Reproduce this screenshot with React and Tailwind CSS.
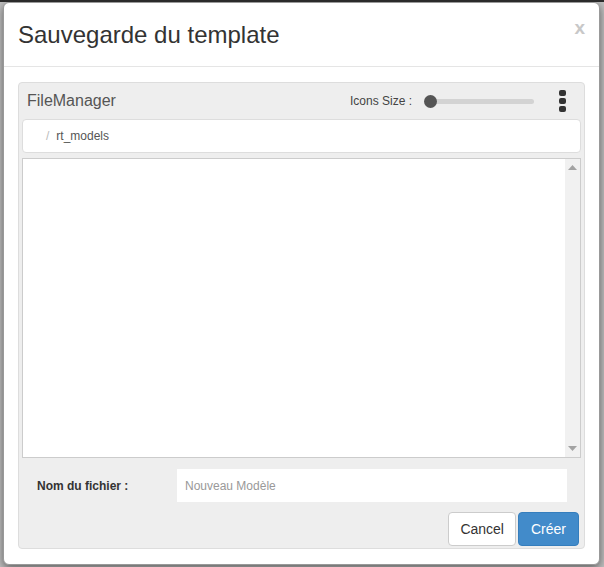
import React from "react";

const Kebab = () => (
  <div className="flex flex-col items-center gap-[2px] w-[8px] ml-[24px]">
    <span className="block w-[7px] h-[6px] rounded-[2px] bg-[#333]" />
    <span className="block w-[7px] h-[6px] rounded-[2px] bg-[#333]" />
    <span className="block w-[7px] h-[6px] rounded-[2px] bg-[#333]" />
  </div>
);

const IconsSlider = ({ value = 0 }) => (
  <div className="flex items-center">
    <span className="text-[12px] text-[#444] mr-[12px]">Icons Size :</span>
    <div className="relative w-[110px] h-[12px] flex items-center">
      <div className="w-full h-[5px] ml-[6px] bg-[#d3d3d3] rounded-sm" />
      <span
        className="absolute top-0 w-[13px] h-[13px] rounded-full bg-[#555]"
        style={{ left: `${value}%` }}
      />
    </div>
  </div>
);

const Scrollbar = () => (
  <div className="w-[15px] h-full bg-[#f1f1f1] flex flex-col items-center justify-between py-[6px]">
    <svg width="9" height="5" viewBox="0 0 9 5">
      <path d="M0 5 L4.5 0 L9 5 Z" fill="#a3a3a3" />
    </svg>
    <svg width="9" height="5" viewBox="0 0 9 5">
      <path d="M0 0 L4.5 5 L9 0 Z" fill="#a3a3a3" />
    </svg>
  </div>
);

export default function App() {
  return (
    <div
      className="w-[604px] h-[567px] bg-[#bfbfbf] border-t-2 border-[#2a2a2a] overflow-hidden"
      style={{ fontFamily: '"Liberation Sans", Arial, sans-serif' }}
    >
      <div className="ml-[3px] w-[597px] h-[563px] bg-white rounded-[6px] border border-[#999] shadow-[0_3px_9px_rgba(0,0,0,0.5)] flex flex-col">
        {/* header */}
        <div className="h-[64px] pl-[14px] pr-[14px] flex items-center justify-between border-b border-[#e5e5e5]">
          <h4 className="text-[24px] leading-none text-[#333]">
            Sauvegarde du template
          </h4>
          <span className="text-[19px] font-bold text-[#c8c8c8] -mt-[12px]">x</span>
        </div>

        {/* body */}
        <div className="flex-1 px-[14px] pt-[15px] pb-[15px]">
          <div className="h-full bg-[#eeeeee] border border-[#dddddd] rounded-[4px] flex flex-col px-[3px]">
            <div className="h-[36px] flex items-center pl-[5px] pr-[15px]">
              <span className="text-[16px] text-[#555]">FileManager</span>
              <div className="ml-auto flex items-center">
                <IconsSlider value={0} />
                <Kebab />
              </div>
            </div>

            <div className="h-[34px] bg-white border border-[#dddddd] rounded-[4px] flex items-center pl-[23px] text-[12px]">
              <span className="text-[#bbb] mr-[7px]">/</span>
              <span className="text-[#555]">rt_models</span>
            </div>

            <div className="mt-[5px] h-[300px] bg-white border border-[#cccccc] flex justify-end">
              <Scrollbar />
            </div>

            <div className="mt-[11px] flex items-center">
              <label className="w-[155px] pl-[15px] text-[12px] font-bold text-[#333]">
                Nom du fichier :
              </label>
              <input
                className="w-[390px] h-[33px] bg-white px-[8px] text-[12px] text-[#555] placeholder-[#999] outline-none"
                placeholder="Nouveau Modèle"
              />
            </div>

            <div className="mt-[10px] flex justify-end gap-[2px] pr-[2px]">
              <button className="h-[34px] px-[11px] bg-white border border-[#cccccc] rounded-[4px] text-[14px] text-[#333]">
                Cancel
              </button>
              <button className="h-[34px] px-[12px] bg-[#428bca] border border-[#357ebd] rounded-[4px] text-[14px] text-white">
                Créer
              </button>
            </div>
          </div>
        </div>
      </div>
    </div>
  );
}
